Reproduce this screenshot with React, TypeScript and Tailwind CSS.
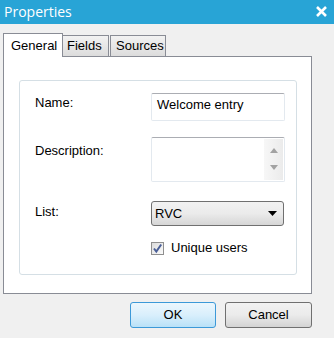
import React from "react";

const Field = (props: { label: string; labelPad: string; children: React.ReactNode; className?: string }) => {
  return (
    <div className={`flex ${props.className ?? ""}`}>
      <div className={`w-[116px] ${props.labelPad}`}>{props.label}</div>
      {props.children}
    </div>
  );
};

const App = () => {
  return (
    <div className="w-[334px] h-[338px] bg-[#f0f0f0] flex flex-col text-[13px] leading-4 text-black font-['Liberation_Sans',Arial,sans-serif]">
      {/* title bar */}
      <div className="h-6 bg-[#28a4d6] flex items-center justify-between pl-1 pr-[7px]">
        <span className="text-white text-[14px] font-['Open_Sans',sans-serif]">Properties</span>
        <svg width="11" height="11" viewBox="0 0 11 11" className="mb-[2px]">
          <path d="M1 1 L10 10 M10 1 L1 10" stroke="#fff" strokeWidth="2.6" />
        </svg>
      </div>

      <div className="pl-[3px] pt-[9px] w-[312px]">
        {/* tabs */}
        <div className="flex items-end">
          <div className="relative z-10 -mb-px h-[24px] w-[60px] bg-white border border-b-0 border-[#898c95] pl-[7px] pt-[4px]">
            General
          </div>
          <div className="h-[21px] w-[46px] border border-b-0 border-l-0 border-[#898c95] bg-gradient-to-b from-[#f2f2f2] to-[#dcdcdc] pl-[4px] pt-[2px]">
            Fields
          </div>
          <div className="ml-px h-[21px] w-[56px] border border-b-0 border-[#898c95] bg-gradient-to-b from-[#f2f2f2] to-[#dcdcdc] pl-[5px] pt-[2px]">
            Sources
          </div>
        </div>

        {/* tab panel */}
        <div className="h-[238px] w-[309px] bg-white border border-[#898c95]">
          <div className="ml-[15px] mt-[23px] w-[278px] h-[195px] border border-[#d5dfe5] rounded-[3px] pl-[15px] pt-[12px]">
            <Field label="Name:" labelPad="pt-[2px]">
              <div className="w-[134px] h-[28px] border border-[#e3e9ef] border-t-[#abadb3] rounded-[2px] pl-[5px] pt-[3px]">
                Welcome entry
              </div>
            </Field>

            <Field label="Description:" labelPad="pt-[6px]" className="mt-[16px]">
              <div className="w-[134px] h-[45px] border border-[#e3e9ef] border-t-[#abadb3] rounded-[2px] flex justify-end p-[1px]">
                <div className="w-[19px] h-full bg-gradient-to-r from-[#f7f7f7] to-[#ebebeb] flex flex-col items-center">
                  <svg width="8" height="5" viewBox="0 0 8 5" className="mt-[9px]">
                    <path d="M0 5 L4 0 L8 5 Z" fill="#a2a2a2" />
                  </svg>
                  <svg width="8" height="5" viewBox="0 0 8 5" className="mt-[12px]">
                    <path d="M0 0 L8 0 L4 5 Z" fill="#a2a2a2" />
                  </svg>
                </div>
              </div>
            </Field>

            <Field label="List:" labelPad="pt-[3px]" className="mt-[19px]">
              <div className="w-[133px] h-[25px] border border-[#707070] rounded-[3px] bg-gradient-to-b from-[#f2f2f2] via-[#ebebeb] to-[#d6d6d6] flex items-center justify-between pl-[3px] pr-[6px]">
                <span>RVC</span>
                <svg width="9" height="5" viewBox="0 0 9 5">
                  <path d="M0 0 L9 0 L4.5 5 Z" fill="#000" />
                </svg>
              </div>
            </Field>

            <div className="mt-[14px] ml-[116px] flex items-center gap-[7px]">
              <div className="w-[13px] h-[13px] border border-[#8f8f8f] bg-gradient-to-br from-[#dcdcdc] to-[#fbfbfb] flex items-center justify-center">
                <svg width="11" height="11" viewBox="0 0 11 11">
                  <path d="M2 5.5 L4.3 8.5 L9.2 1.5" stroke="#4a5f97" strokeWidth="2" fill="none" />
                </svg>
              </div>
              <span>Unique users</span>
            </div>
          </div>
        </div>
      </div>

      {/* buttons */}
      <div className="w-[312px] mt-[8px] flex justify-end gap-[9px]">
        <button className="w-[86px] h-[26px] rounded-[3px] border border-[#3c99d8] bg-gradient-to-b from-[#ecf7fd] via-[#d9effc] to-[#b9e1f7] text-[13px]">
          OK
        </button>
        <button className="w-[87px] h-[26px] rounded-[3px] border border-[#707070] bg-gradient-to-b from-[#f2f2f2] via-[#ebebeb] to-[#d3d3d3] text-[13px]">
          Cancel
        </button>
      </div>
    </div>
  );
};

export default App;
